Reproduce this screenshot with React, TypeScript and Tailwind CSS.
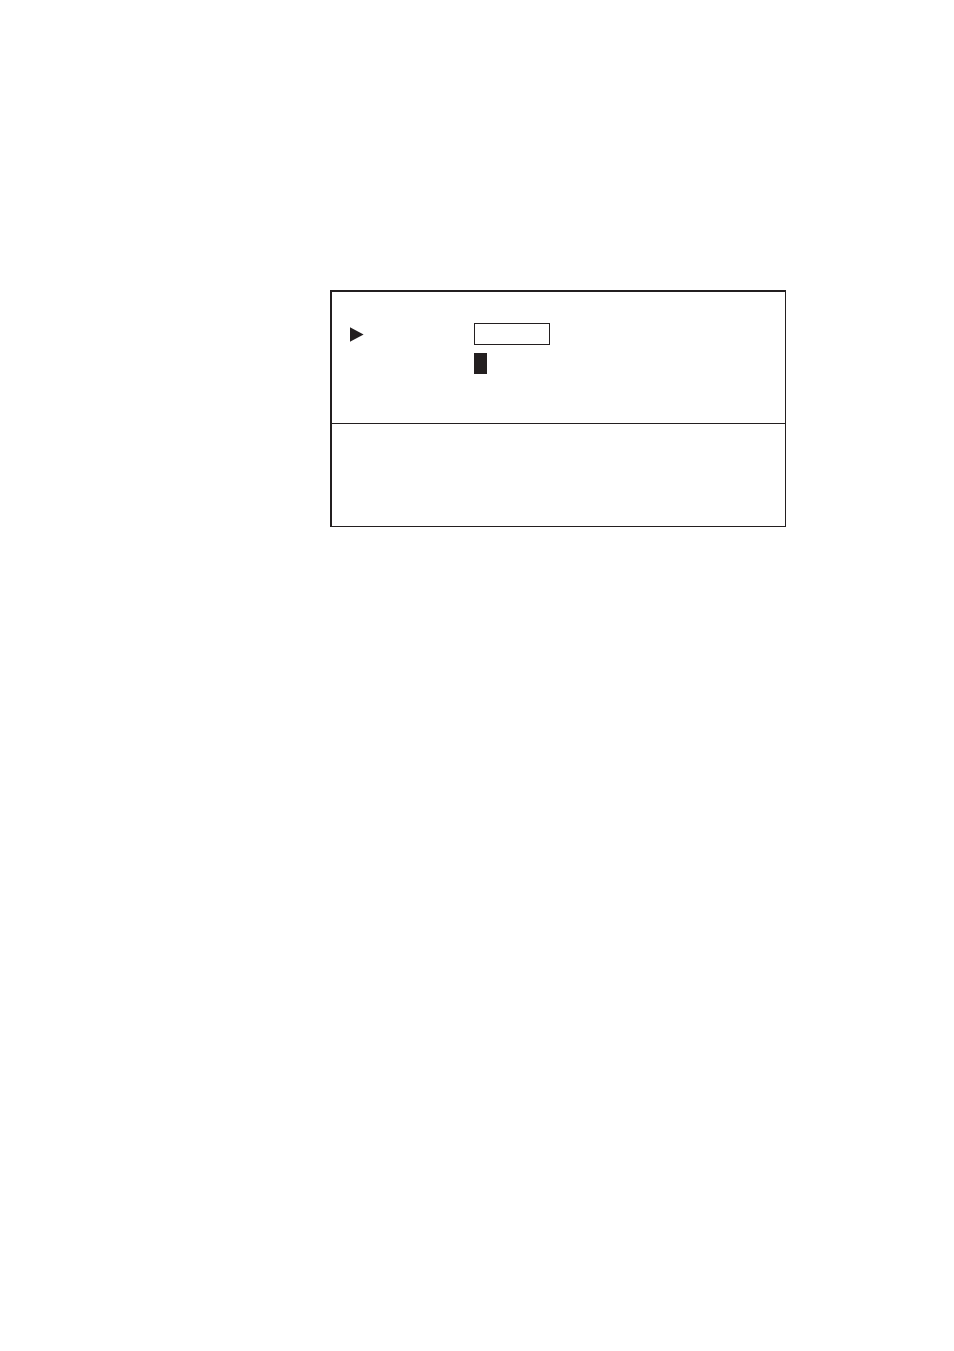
function Pointer() {
  return (
    <svg className="h-[15px] w-[14px]" viewBox="0 0 14 15" fill="currentColor" aria-hidden="true">
      <path d="M0 0.2 L13.6 7.5 L0 14.8 Z" />
    </svg>
  );
}

export default function App() {
  return (
    <main className="min-h-screen bg-white pt-[290px] pr-[168px] pl-[330px] text-[#231f20]">
      <div className="border-t-2 border-r border-b border-l-2 border-[#231f20]">
        {/* entry area */}
        <section className="grid grid-cols-[124px_1fr] items-center gap-y-2 border-b border-[#231f20] pt-[31px] pb-[49px] pl-[18px]">
          <Pointer />
          <input
            type="text"
            aria-label="Value"
            className="h-[22px] w-[76px] rounded-none border border-[#231f20] bg-white px-1 text-sm outline-none"
          />
          {/* block cursor on the second line */}
          <span className="col-start-2 h-[21px] w-[13px] bg-[#231f20]" />
        </section>

        {/* message area */}
        <section className="min-h-[102px]" />
      </div>
    </main>
  );
}
